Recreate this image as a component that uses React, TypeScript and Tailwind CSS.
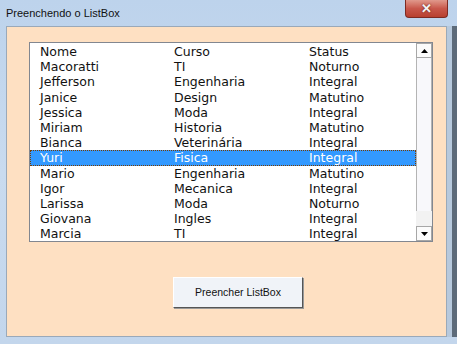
type Row = { nome: string; curso: string; status: string };

const rows: Row[] = [
  { nome: "Nome", curso: "Curso", status: "Status" },
  { nome: "Macoratti", curso: "TI", status: "Noturno" },
  { nome: "Jefferson", curso: "Engenharia", status: "Integral" },
  { nome: "Janice", curso: "Design", status: "Matutino" },
  { nome: "Jessica", curso: "Moda", status: "Integral" },
  { nome: "Miriam", curso: "Historia", status: "Matutino" },
  { nome: "Bianca", curso: "Veterinária", status: "Integral" },
  { nome: "Yuri", curso: "Fisica", status: "Integral" },
  { nome: "Mario", curso: "Engenharia", status: "Matutino" },
  { nome: "Igor", curso: "Mecanica", status: "Integral" },
  { nome: "Larissa", curso: "Moda", status: "Noturno" },
  { nome: "Giovana", curso: "Ingles", status: "Integral" },
  { nome: "Marcia", curso: "TI", status: "Integral" },
];

const SELECTED = 7;

function Arrow({ down }: { down?: boolean }) {
  return (
    <svg width="7" height="4" viewBox="0 0 7 4">
      <polygon points={down ? "0,0 7,0 3.5,4" : "0,4 7,4 3.5,0"} fill="#000" />
    </svg>
  );
}

export default function App() {
  return (
    <div className="w-[457px] h-[344px] overflow-hidden flex flex-col bg-gradient-to-b from-[#bdd3ec] via-[#c9dbef] to-[#c3d6ec] font-['Liberation_Sans',sans-serif]">
      {/* title bar */}
      <div className="h-[26px] flex items-start shrink-0">
        <span className="pl-[6px] pt-[7px] text-[11px] leading-[12px] text-[#111]">Preenchendo o ListBox</span>
        <div className="ml-auto mr-[9px] w-[43px] h-[18px] rounded-b-[4px] border border-t-0 border-[#7d2a22] bg-gradient-to-b from-[#e0988c] via-[#c8574b] to-[#b8402f] flex items-center justify-center">
          <span className="text-[#f4f4f4] font-bold text-[13px] leading-none [text-shadow:0_0_2px_#5a1a10]">✕</span>
        </div>
      </div>

      <div className="flex flex-1">
        <div className="w-[6px] shrink-0" />
        {/* client area */}
        <div className="w-[441px] h-[311px] border border-[#9aa9b9] bg-[#fee0c2] flex flex-col items-start pl-[22px] pt-[15px]">
          {/* listbox */}
          <div className="w-[404px] h-[200px] border border-[#828790] bg-white flex font-['DejaVu_Sans',sans-serif] text-[12.5px] text-[#111]">
            <div className="flex-1 pt-[1px]">
              {rows.map((r, i) => (
                <div
                  key={r.nome}
                  className={
                    i === SELECTED
                      ? "h-[15.2px] leading-[13.2px] grid grid-cols-[134px_135px_1fr] pl-[9px] bg-[#3399ff] text-white border border-dotted border-[#7a3c00]"
                      : "h-[15.2px] leading-[15.2px] grid grid-cols-[134px_135px_1fr] pl-[10px]"
                  }
                >
                  <span>{r.nome}</span>
                  <span>{r.curso}</span>
                  <span>{r.status}</span>
                </div>
              ))}
            </div>
            {/* scrollbar */}
            <div className="w-[16px] flex flex-col bg-[#f2f2f2]">
              <div className="h-[15px] border border-[#a7a7a7] bg-[#fbfbfb] flex items-center justify-center">
                <Arrow />
              </div>
              <div className="h-[153px] border-x border-[#b4b4b4] bg-[#f8f8fb]" />
              <div className="flex-1" />
              <div className="h-[15px] border border-[#a7a7a7] bg-[#fbfbfb] flex items-center justify-center">
                <Arrow down />
              </div>
            </div>
          </div>

          {/* button */}
          <button className="mt-[35px] ml-[144px] w-[130px] h-[31px] border border-t-[#ffffff] border-l-[#ffffff] border-r-[#555] border-b-[#555] shadow-[1px_1px_0_#999] bg-[#f0f3f8] text-[10.5px] text-[#111] font-['Liberation_Sans',sans-serif]">
            Preencher ListBox
          </button>
        </div>
        <div className="w-[5px] shrink-0 bg-[#b7c9dd]" />
        <div className="w-[5px] shrink-0 bg-[#5d6b7a]" />
      </div>
      <div className="h-[7px] shrink-0" />
    </div>
  );
}
